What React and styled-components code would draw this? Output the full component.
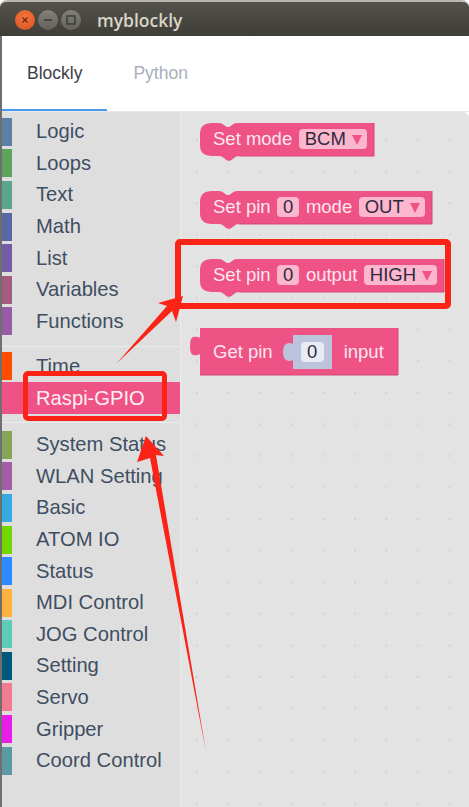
import React from 'react';
import styled, { createGlobalStyle } from 'styled-components';

const GlobalStyle = createGlobalStyle`
  html, body {
    margin: 0;
    padding: 0;
    background: #fff;
  }
  * {
    box-sizing: border-box;
  }
`;

const BLOCK_PINK = '#ef5285';
const BLOCK_EDGE = '#d4487a';

const Page = styled.div`
  position: relative;
  width: 469px;
  height: 807px;
  overflow: hidden;
  display: flex;
  flex-direction: column;
  background: #fff;
  font-family: "Liberation Sans", Arial, sans-serif;
`;

const TitleBar = styled.div`
  flex: 0 0 36px;
  display: flex;
  align-items: center;
  padding: 1px 0 0 15px;
  background: linear-gradient(#54524b, #3e3d37);
  border-top: 2px solid #b9b7b1;
  border-radius: 7px 7px 0 0;
`;

const WindowButtons = styled.div`
  display: flex;
  gap: 3px;
  margin-right: 16px;
`;

const WindowButton = styled.div`
  width: 20px;
  height: 20px;
  border-radius: 50%;
  display: flex;
  align-items: center;
  justify-content: center;
  background: ${(props) =>
    props.$close
      ? 'radial-gradient(circle at 50% 35%, #f5763c, #d9501f)'
      : 'linear-gradient(#82827a, #62625b)'};
`;

const Title = styled.div`
  color: #d9d4c8;
  font-family: "Open Sans", sans-serif;
  font-weight: 600;
  font-size: 17.5px;
  line-height: 20px;
`;

const Body = styled.div`
  flex: 1;
  display: flex;
  flex-direction: column;
  border-left: 2px solid #6f6f6f;
  min-height: 0;
`;

const TabBar = styled.div`
  flex: 0 0 76px;
  display: flex;
  background: #fff;
  border-bottom: 1px solid #e4e7ed;
`;

const Tab = styled.div`
  display: flex;
  align-items: center;
  height: 75px;
  padding: 2px 25px 0;
  margin-right: 1px;
  font-size: 17.5px;
  color: ${(props) => (props.$active ? '#3c4047' : '#a8afbb')};
  border-bottom: 2px solid ${(props) => (props.$active ? '#4a9bec' : 'transparent')};
`;

const Main = styled.div`
  flex: 1;
  display: flex;
  min-height: 0;
`;

const Sidebar = styled.div`
  flex: 0 0 179px;
  padding-top: 4px;
  background: #dedede;
  border-right: 1px solid #ececec;
`;

const Row = styled.div`
  height: 31.6px;
  display: flex;
  align-items: center;
  background: ${(props) => (props.$active ? BLOCK_PINK : 'transparent')};
`;

const Swatch = styled.div`
  width: 10px;
  height: 28px;
  margin-right: 24px;
  background: ${(props) => props.$color};
`;

const RowLabel = styled.div`
  font-size: 20.2px;
  white-space: nowrap;
  color: ${(props) => (props.$active ? '#fdeef3' : '#3f4e62')};
`;

const Separator = styled.div`
  height: 1px;
  margin: 8.5px 0 ${(props) => props.$after}px;
  background: #ebebeb;
`;

const Workspace = styled.div`
  flex: 1;
  display: flex;
  flex-direction: column;
  align-items: flex-start;
  gap: 35px;
  padding: 11px 0 0 19px;
  border-top-right-radius: 6px;
  background-color: #e3e3e3;
  background-image: radial-gradient(circle, #d3d3d3 1px, transparent 1.4px);
  background-size: 31.6px 31.6px;
  background-position: 0.2px 12.2px;
`;

const Block = styled.div`
  position: relative;
  flex: none;
  height: ${(props) => props.$height}px;
  width: ${(props) => props.$width}px;
  margin-top: ${(props) => props.$top ?? 0}px;
  padding-left: 13px;
  padding-bottom: ${(props) => props.$lift ?? 0}px;
  display: flex;
  align-items: center;
  gap: ${(props) => props.$gap ?? 6.5}px;
  font-size: 18.5px;
  color: #fde6ee;
  white-space: nowrap;
`;

const BlockShape = styled.svg`
  position: absolute;
  left: -12px;
  top: 0;
  overflow: visible;
`;

const BlockText = styled.span`
  position: relative;
`;

const InputText = styled(BlockText)`
  margin-left: 6px;
`;

const Field = styled.span`
  position: relative;
  height: 20px;
  padding: 0 ${(props) => (props.$menu ? '5px' : '6px')} 0 6px;
  display: inline-flex;
  align-items: center;
  gap: 6px;
  border-radius: 4px;
  line-height: 20px;
  background: #fcb6cd;
  color: #2e2a3e;
`;

const Caret = styled.span`
  width: 0;
  height: 0;
  margin-top: 2px;
  border-left: 5px solid transparent;
  border-right: 5px solid transparent;
  border-top: 10px solid ${BLOCK_PINK};
`;

const ValueSlot = styled.span`
  position: relative;
  width: 39px;
  height: 34px;
  margin-left: 20px;
  margin-right: 6px;
  display: flex;
  align-items: center;
  justify-content: center;
`;

const ValueField = styled.span`
  position: relative;
  width: 23px;
  height: 20px;
  border-radius: 4px;
  text-align: center;
  line-height: 20px;
  background: #e9ecf6;
  color: #2e3138;
`;

const ValueShape = styled.svg`
  position: absolute;
  left: -10px;
  top: 0;
  overflow: visible;
`;

const Highlight = styled.div`
  position: absolute;
  left: ${(props) => props.$x}px;
  top: ${(props) => props.$y}px;
  width: ${(props) => props.$w}px;
  height: ${(props) => props.$h}px;
  border: ${(props) => props.$stroke}px solid #fb2216;
  border-radius: 5px;
`;

const Arrows = styled.svg`
  position: absolute;
  left: 0;
  top: 0;
`;

const groups = [
  [
    ['Logic', '#5b80a5'],
    ['Loops', '#5ba55b'],
    ['Text', '#5ba58c'],
    ['Math', '#5b67a5'],
    ['List', '#745ba5'],
    ['Variables', '#a55b80'],
    ['Functions', '#995ba5'],
  ],
  [
    ['Time', '#ff4d00'],
    ['Raspi-GPIO', BLOCK_PINK, true],
  ],
  [
    ['System Status', '#85a55b'],
    ['WLAN Setting', '#a55ba5'],
    ['Basic', '#36a9e1'],
    ['ATOM IO', '#74d600'],
    ['Status', '#2b8cff'],
    ['MDI Control', '#ffb23e'],
    ['JOG Control', '#5ccbb8'],
    ['Setting', '#00597a'],
    ['Servo', '#f27b90'],
    ['Gripper', '#e81ee8'],
    ['Coord Control', '#5b9aa5'],
  ],
];

// statement block outline, the left hump and the notch stay fixed, only the width changes
const hatPath = (w, h) =>
  `M 24 0 L 31 0 Q 34 0 36 2 L 38 3.5 Q 40 4.5 42 3.5 L 44 2 Q 46 0 49 0 L ${w + 12} 0 L ${w + 12} ${h} L 51 ${h}
   Q 48 ${h} 46 ${h + 2} Q 43 ${h + 5} 41 ${h + 5} Q 38 ${h + 5} 36 ${h + 2} Q 34 ${h} 31 ${h}
   L 24 ${h} Q 12 ${h} 12 ${h - 11} L 12 11 Q 12 0 24 0 Z`;

const HatBlock = ({ width, children }) => (
  <Block $width={width} $height={33} $lift={1}>
    <BlockShape width={width + 12} height={38}>
      <path d={hatPath(width, 33)} fill={BLOCK_PINK} />
      <path
        d={`M ${width + 12} 0 L ${width + 12} 33 L 51 33`}
        fill="none"
        stroke={BLOCK_EDGE}
        strokeWidth="1"
      />
    </BlockShape>
    {children}
  </Block>
);

const GetPinBlock = () => (
  <Block $width={198} $height={47} $gap={0} $top={1}>
    <BlockShape width={210} height={47}>
      <path
        d="M 12 0 L 210 0 L 210 47 L 12 47 L 12 26 Q 9 28 5 27 Q 2 26 2 18 Q 2 10 5 9 Q 9 8 12 10 Z"
        fill={BLOCK_PINK}
      />
      <path d="M 210 0 L 210 47 L 12 47" fill="none" stroke={BLOCK_EDGE} strokeWidth="1" />
    </BlockShape>
    <BlockText>Get pin</BlockText>
    <ValueSlot>
      <ValueShape width={49} height={34}>
        <path
          d="M 10 0 L 49 0 L 49 34 L 10 34 L 10 25 Q 6 27 3 25 Q 0 23 0 17 Q 0 11 3 9 Q 6 7 10 9 Z"
          fill="#bcc3dc"
        />
      </ValueShape>
      <ValueField>0</ValueField>
    </ValueSlot>
    <InputText>input</InputText>
  </Block>
);

const WindowIcon = ({ kind }) => (
  <svg width="10" height="10" viewBox="0 0 10 10">
    {kind === 'close' && (
      <path d="M 2.5 2.5 L 7.5 7.5 M 7.5 2.5 L 2.5 7.5" stroke="#6b2a14" strokeWidth="1.3" />
    )}
    {kind === 'min' && <path d="M 1 5 L 9 5" stroke="#3b3b36" strokeWidth="1.5" />}
    {kind === 'max' && (
      <rect x="1" y="1" width="8" height="8" fill="none" stroke="#3b3b36" strokeWidth="1.4" />
    )}
  </svg>
);

const App = () => {
  return (
    <Page>
      <GlobalStyle />
      <TitleBar>
        <WindowButtons>
          <WindowButton $close>
            <WindowIcon kind="close" />
          </WindowButton>
          <WindowButton>
            <WindowIcon kind="min" />
          </WindowButton>
          <WindowButton>
            <WindowIcon kind="max" />
          </WindowButton>
        </WindowButtons>
        <Title>myblockly</Title>
      </TitleBar>
      <Body>
        <TabBar>
          <Tab $active>Blockly</Tab>
          <Tab>Python</Tab>
        </TabBar>
        <Main>
          <Sidebar>
            {groups.map((group, index) => (
              <React.Fragment key={index}>
                {index > 0 && <Separator $after={index === 1 ? 4 : 5.6} />}
                {group.map(([name, color, active]) => (
                  <Row key={name} $active={active}>
                    <Swatch $color={color} />
                    <RowLabel $active={active}>{name}</RowLabel>
                  </Row>
                ))}
              </React.Fragment>
            ))}
          </Sidebar>
          <Workspace>
            <HatBlock width={174}>
              <BlockText>Set mode</BlockText>
              <Field $menu>
                BCM
                <Caret />
              </Field>
            </HatBlock>
            <HatBlock width={232}>
              <BlockText>Set pin</BlockText>
              <Field>0</Field>
              <BlockText>mode</BlockText>
              <Field $menu>
                OUT
                <Caret />
              </Field>
            </HatBlock>
            <HatBlock width={244}>
              <BlockText>Set pin</BlockText>
              <Field>0</Field>
              <BlockText>output</BlockText>
              <Field $menu>
                HIGH
                <Caret />
              </Field>
            </HatBlock>
            <GetPinBlock />
          </Workspace>
        </Main>
      </Body>
      <Highlight $x={175} $y={239} $w={276} $h={70} $stroke={6} />
      <Highlight $x={23} $y={371} $w={144} $h={50} $stroke={5} />
      <Arrows width="469" height="807">
        <polygon points="117,363 167,306 158,303 183,296 176,322 172,311" fill="#fb2216" />
        <polygon points="206,752 156,455 164,456 146,436 137,462 150,458" fill="#fb2216" />
      </Arrows>
    </Page>
  );
};

export default App;
